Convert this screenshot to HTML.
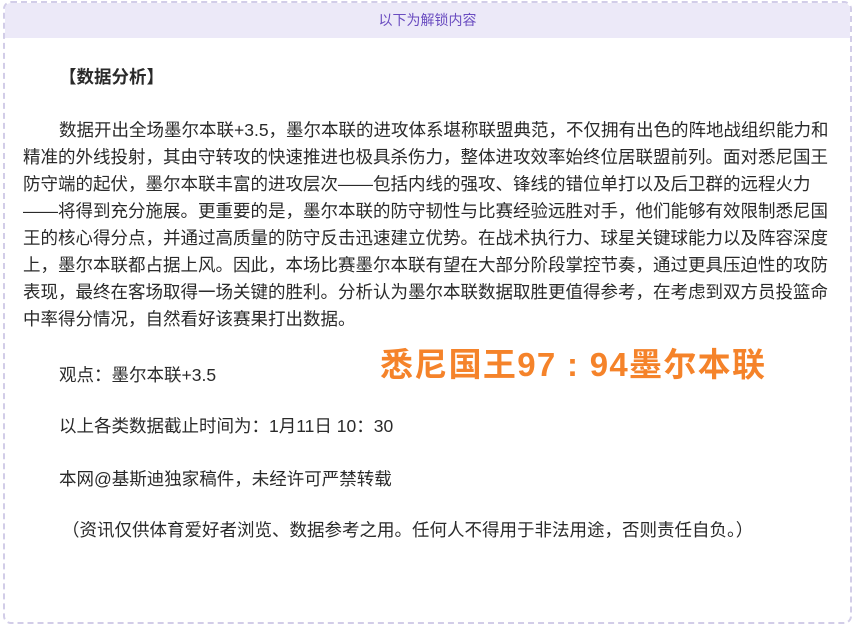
<!DOCTYPE html>
<html><head><meta charset="utf-8"><style>
html,body{margin:0;padding:0;background:#fff;width:855px;height:625px;overflow:hidden}
.box{position:absolute;left:3px;top:1px;width:845px;height:619px;border:2px dashed #d2cde8;border-radius:8px;overflow:hidden}
.hd{position:absolute;left:0;top:0;right:0;height:35px;background:#ece9f8;color:#6a4cc0;font:14px "Liberation Sans","Noto Sans CJK SC",sans-serif;text-align:center;line-height:35px}
.l{position:absolute;white-space:nowrap;font:17.5px "Liberation Sans","Noto Sans CJK SC",sans-serif;color:#2a2a2a;line-height:20px}
.b{font-weight:bold}
.sc{position:absolute;left:380px;top:345px;white-space:nowrap;font:bold 33px "Liberation Sans","Noto Sans CJK SC",sans-serif;letter-spacing:1.3px;color:#f5832a;line-height:40px}
</style></head><body>
<div class="box"><div class="hd">以下为解锁内容</div></div>
<div class="l b" style="left:59px;top:67px">【数据分析】</div>
<div class="l" style="left:59px;top:120px">数据开出全场墨尔本联+3.5，墨尔本联的进攻体系堪称联盟典范，不仅拥有出色的阵地战组织能力和</div>
<div class="l" style="left:23px;top:147px">精准的外线投射，其由守转攻的快速推进也极具杀伤力，整体进攻效率始终位居联盟前列。面对悉尼国王</div>
<div class="l" style="left:23px;top:174px">防守端的起伏，墨尔本联丰富的进攻层次——包括内线的强攻、锋线的错位单打以及后卫群的远程火力</div>
<div class="l" style="left:23px;top:201px">——将得到充分施展。更重要的是，墨尔本联的防守韧性与比赛经验远胜对手，他们能够有效限制悉尼国</div>
<div class="l" style="left:23px;top:228px">王的核心得分点，并通过高质量的防守反击迅速建立优势。在战术执行力、球星关键球能力以及阵容深度</div>
<div class="l" style="left:23px;top:255px">上，墨尔本联都占据上风。因此，本场比赛墨尔本联有望在大部分阶段掌控节奏，通过更具压迫性的攻防</div>
<div class="l" style="left:23px;top:282px">表现，最终在客场取得一场关键的胜利。分析认为墨尔本联数据取胜更值得参考，在考虑到双方员投篮命</div>
<div class="l" style="left:23px;top:309px">中率得分情况，自然看好该赛果打出数据。</div>
<div class="sc">悉尼国王97 : 94墨尔本联</div>
<div class="l" style="left:59px;top:365px">观点：墨尔本联+3.5</div>
<div class="l" style="left:59px;top:416px">以上各类数据截止时间为：1月11日 10：30</div>
<div class="l" style="left:59px;top:469px">本网@基斯迪独家稿件，未经许可严禁转载</div>
<div class="l" style="left:62px;top:520px">（资讯仅供体育爱好者浏览、数据参考之用。任何人不得用于非法用途，否则责任自负。）</div>
</body></html>
